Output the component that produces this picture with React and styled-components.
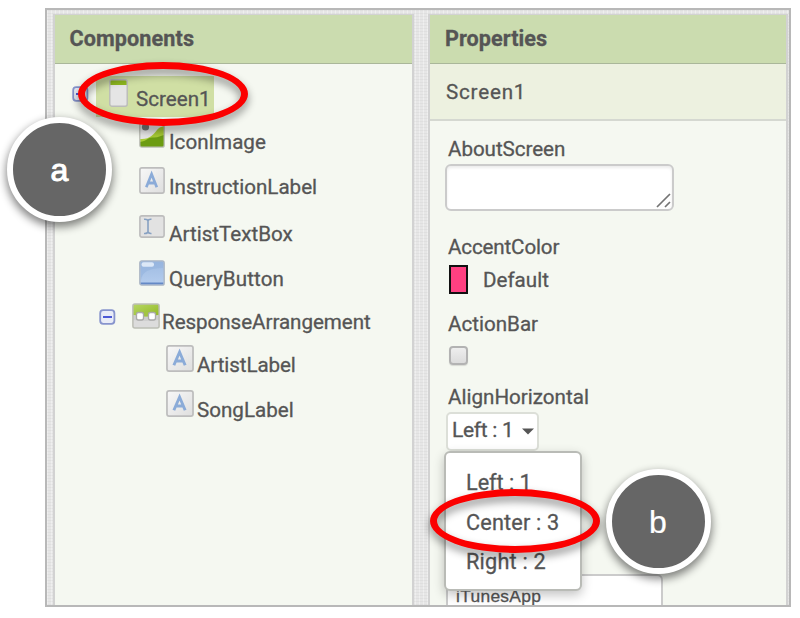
import React from 'react';
import styled, { createGlobalStyle } from 'styled-components';

const GlobalStyle = createGlobalStyle`
  * { box-sizing: border-box; }
  body { margin: 0; background: #fff; font-family: Roboto, sans-serif; color: #555; -webkit-text-stroke: 0.3px; }
`;

const Page = styled.div`
  position: relative;
  width: 800px;
  height: 618px;
  padding: 8px 9px 11px 45px;
  overflow: hidden;
`;

const Frame = styled.div`
  display: flex;
  gap: 14px;
  height: 599px;
  padding: 4px 0 0 6px;
  overflow: hidden;
  border: 2px solid #b8b8b8;
  background-color: #e6e6e6;
  background-image:
    repeating-linear-gradient(0deg, rgba(0,0,0,0.03) 0 1px, transparent 1px 3px),
    repeating-linear-gradient(90deg, rgba(255,255,255,0.35) 0 1px, transparent 1px 4px);
`;

const Panel = styled.section`
  flex: 0 0 ${(p) => p.$width}px;
  height: 600px;
  border: 2px solid #d2d2d2;
  border-top-width: 1px;
  background: #f5f8f1;
`;

const PanelHeader = styled.h2`
  height: 49px;
  margin: 0;
  padding-left: ${(p) => p.$inset}px;
  border-bottom: 1px solid #aab79a;
  background: #cbdcaf;
  font-size: 21.6px;
  font-weight: 700;
  line-height: 47px;
  letter-spacing: ${(p) => p.$track || 0.1}px;
`;

const TreeRow = styled.div`
  display: flex;
  align-items: flex-end;
  height: ${(p) => p.$height}px;
  padding-left: ${(p) => p.$indent}px;
`;

const Label = styled.span`
  display: block;
  height: 24px;
  font-size: 20.6px;
  line-height: 24px;
  letter-spacing: ${(p) => p.$track || 0}px;
  white-space: nowrap;
`;

const IconSlot = styled.span`
  display: flex;
  flex: none;
  width: ${(p) => p.$width}px;
  margin-bottom: ${(p) => p.$lift ?? 5}px;
  svg { display: block; }
`;

const Selected = styled.div`
  display: flex;
  align-items: flex-end;
  height: 41px;
  width: 118px;
  margin-bottom: -6px;
  padding: 0 0 6px 13px;
  background: #d0dfa4;
`;

const SelectedName = styled.div`
  display: flex;
  height: 57px;
  padding-left: 16px;
  align-items: center;
  border-bottom: 2px solid #d5d8d1;
  background: #edf1e0;
`;

const Fields = styled.div`
  display: flex;
  flex-direction: column;
  align-items: flex-start;
  padding: 16px 0 0 15px;
`;

const FieldLabel = styled(Label)`
  margin: ${(p) => p.$gap || 0}px 0 0 3px;
`;

const AboutInput = styled.div`
  display: flex;
  align-items: flex-end;
  justify-content: flex-end;
  width: 229px;
  height: 47px;
  margin-top: 3px;
  padding: 0 1px 1px 0;
  border: 2px solid #cbcbcb;
  border-radius: 6px;
  background: #fff;
  box-shadow: inset 0 2px 3px rgba(0,0,0,0.08);
`;

const ColorRow = styled.div`
  display: flex;
  align-items: center;
  gap: 15px;
  height: 29px;
  margin: 6px 0 0 4px;
`;

const Swatch = styled.span`
  width: 19px;
  height: 29px;
  border: 2px solid #111;
  background: #ff4081;
`;

const Checkbox = styled.span`
  width: 19px;
  height: 19px;
  margin: 10px 0 0 4px;
  border: 2px solid #b3b3b3;
  border-radius: 4px;
  background: linear-gradient(#eee, #dcdcdc);
  box-shadow: 0 1px 1px rgba(0,0,0,0.12);
`;

const Select = styled.div`
  display: flex;
  align-items: center;
  gap: 8px;
  width: 93px;
  height: 39px;
  margin: 3px 0 0 1px;
  padding: 0 0 3px 4px;
  border: 2px solid #dcdfd8;
  border-radius: 5px;
  background: #fff;
  font-size: 21px;
  letter-spacing: -0.3px;
  white-space: nowrap;
  svg { flex: none; margin-top: 3px; }
`;

const AppName = styled.div`
  width: 217px;
  height: 60px;
  margin: 123px 0 0 1px;
  padding: 10px 0 0 8px;
  border: 2px solid #cbcbcb;
  border-radius: 6px;
  background: #fff;
  font: 17.4px/20px "Liberation Sans", sans-serif;
  letter-spacing: 0.3px;
`;

const Menu = styled.div`
  position: absolute;
  left: 444px;
  top: 451px;
  display: flex;
  flex-direction: column;
  width: 138px;
  height: 140px;
  padding: 10px 0 0 20px;
  border: 2px solid #b9bbb6;
  border-radius: 6px;
  background: #fff;
  box-shadow: 0 4px 11px rgba(0,0,0,0.24);
`;

const MenuItem = styled.span`
  height: 39.5px;
  font-size: 21.7px;
  line-height: 39.5px;
  letter-spacing: ${(p) => p.$track}px;
  white-space: nowrap;
`;

const Ring = styled.div`
  position: absolute;
  left: ${(p) => p.$x}px;
  top: ${(p) => p.$y}px;
  width: 170px;
  height: 64px;
  border: 7px solid #fb0000;
  border-radius: 50%;
  filter: drop-shadow(0 5px 4px rgba(0,0,0,0.45));
`;

const Marker = styled.div`
  position: absolute;
  left: ${(p) => p.$x}px;
  top: ${(p) => p.$y}px;
  display: flex;
  align-items: center;
  justify-content: center;
  width: 105px;
  height: 105px;
  padding-top: ${(p) => p.$drop}px;
  border: 6.5px solid #fff;
  border-radius: 50%;
  background: #666;
  color: #fff;
  font: 400 32px/36px "Liberation Sans", sans-serif;
  -webkit-text-stroke: ${(p) => p.$stroke}px #fff;
  box-shadow: 0 4px 8px 1px rgba(0,0,0,0.48);
`;

const Expander = () => (
  <svg width="17" height="16" viewBox="0 0 17 16">
    <rect x="1.2" y="1.2" width="14.2" height="13.6" rx="3" fill="#e9ecf7" stroke="#8794cd" strokeWidth="1.8" />
    <path d="M4 8H13" stroke="#4c59d5" strokeWidth="2" />
  </svg>
);

const ScreenIcon = () => (
  <svg width="19" height="28" viewBox="0 0 19 28">
    <rect x="1" y="1" width="17" height="26" rx="2" fill="#e5e5e5" />
    <path d="M1 1H18V6H1Z" fill="#8db71f" />
    <rect x="0.8" y="0.8" width="17.4" height="26.4" rx="2" fill="none" stroke="#bbb" strokeWidth="1.4" />
  </svg>
);

const PictureIcon = () => (
  <svg width="26" height="26" viewBox="0 0 26 26">
    <rect x="1" y="1" width="24" height="24" rx="2" fill="#e6e6e6" />
    <circle cx="6.5" cy="5" r="3.6" fill="#777" />
    <path d="M1 17C10 18 15 12 18 8Q20 5 25 4V25H1Z" fill="#a8cc35" />
    <path d="M1 20C8 19 9 15 14 15.500C19 16 21 14 25 13V25H1Z" fill="#6c9c12" />
    <rect x="0.8" y="0.8" width="24.4" height="24.4" rx="2" fill="none" stroke="#b9bcb4" strokeWidth="1.3" />
  </svg>
);

const LabelIcon = ({ size = 26 }) => (
  <svg width={size} height="27" viewBox="0 0 26 26" preserveAspectRatio="none">
    <defs>
      <linearGradient id="labelFill" x1="0" y1="0" x2="1" y2="1">
        <stop offset="0" stopColor="#f8f8f8" /><stop offset="1" stopColor="#dedede" />
      </linearGradient>
    </defs>
    <rect x="0.9" y="0.9" width="24.2" height="24.2" rx="2" fill="url(#labelFill)" stroke="#bdbdbd" strokeWidth="1.6" />
    <path d="M7.300 19.500L12.600 6.800L17.800 19.500M9.300 15.400H16" fill="none" stroke="#8babd8" strokeWidth="2.7" />
  </svg>
);

const TextBoxIcon = () => (
  <svg width="26" height="23" viewBox="0 0 26 23">
    <rect x="0.9" y="0.9" width="24.2" height="21.2" rx="2" fill="#e2e2e2" stroke="#bdbdbd" strokeWidth="1.6" />
    <path d="M5 4.300Q8.500 4 9 6Q9.500 4 12.500 4.300M9 6V17M5 18.500Q8.500 18.800 9 16.800Q9.500 18.800 12.500 18.500" fill="none" stroke="#87a1c2" strokeWidth="1.6" />
  </svg>
);

const ButtonIcon = () => (
  <svg width="26" height="26" viewBox="0 0 26 26">
    <defs>
      <linearGradient id="buttonFill" x1="0" y1="0" x2="0" y2="1">
        <stop offset="0" stopColor="#9ebbe2" /><stop offset="1" stopColor="#b5cdee" />
      </linearGradient>
    </defs>
    <rect x="0.9" y="0.9" width="24.2" height="24.2" rx="2" fill="url(#buttonFill)" />
    <path d="M2 20C3 12 10 8 24 8V2H2Z" fill="#8fb0dc" opacity="0.5" />
    <rect x="2.500" y="2.300" width="12.500" height="4.400" rx="2" fill="#dce8f7" />
    <path d="M1.500 22.500H24.500V24.500H1.500Z" fill="#6489c6" />
    <rect x="0.8" y="0.8" width="24.4" height="24.4" rx="2" fill="none" stroke="#a9b4c3" strokeWidth="1.3" />
  </svg>
);

const ArrangementIcon = () => (
  <svg width="28" height="26" viewBox="0 0 28 26">
    <defs>
      <linearGradient id="arrFill" x1="0" y1="0" x2="1" y2="1">
        <stop offset="0" stopColor="#b7d765" /><stop offset="1" stopColor="#91b823" />
      </linearGradient>
    </defs>
    <rect x="0.9" y="0.9" width="26.200" height="24.200" rx="2" fill="#dcdcdc" />
    <path d="M1 12V1H27V12Q14 15 1 12Z" fill="url(#arrFill)" />
    <path d="M1 12Q14 15 27 12V17Q14 19 1 17Z" fill="#cfcfcf" />
    <path d="M11 9H17V13.200Q14 14 11 13.200Z" fill="#a2c543" />
    <rect x="0.9" y="0.9" width="26.200" height="24.200" rx="2" fill="none" stroke="#bcbeb5" strokeWidth="1.5" />
    <rect x="4.500" y="9.500" width="7" height="7.500" rx="2" fill="#fff" stroke="#aaa" strokeWidth="1.3" />
    <rect x="16.500" y="9.500" width="7" height="7.500" rx="2" fill="#fff" stroke="#aaa" strokeWidth="1.3" />
  </svg>
);

const ResizeGrip = () => (
  <svg width="15" height="15" viewBox="0 0 15 15">
    <path d="M1 14L14 1M9 14L14 9" stroke="#747474" strokeWidth="1.7" />
  </svg>
);

const Caret = () => (
  <svg width="12" height="7" viewBox="0 0 12 7"><path d="M0 0.500H12L6 6.500Z" fill="#555" /></svg>
);

const tree = [
  { name: 'IconImage', height: 43, indent: 84, slot: 30, icon: <PictureIcon />, lift: 6 },
  { name: 'InstructionLabel', height: 45, indent: 84, slot: 30, icon: <LabelIcon /> },
  { name: 'ArtistTextBox', height: 47, indent: 84, slot: 30, icon: <TextBoxIcon />, lift: 8 },
  { name: 'QueryButton', height: 45, indent: 84, slot: 30, icon: <ButtonIcon />, track: 0.1 },
  { name: 'ResponseArrangement', height: 43, indent: 44, slot: 30, icon: <ArrangementIcon />, expand: true, track: -0.05 },
  { name: 'ArtistLabel', height: 43, indent: 111, slot: 31, icon: <LabelIcon size={28} />, track: -0.1 },
  { name: 'SongLabel', height: 45, indent: 111, slot: 31, icon: <LabelIcon size={28} /> },
];

export default function App() {
  return (
    <>
      <GlobalStyle />
      <Page>
        <Frame>
          <Panel $width={361}>
            <PanelHeader $inset={14.5}>Components</PanelHeader>
            <TreeRow $height={47} $indent={17}>
              <IconSlot $width={24} $lift={9}><Expander /></IconSlot>
              <Selected>
                <IconSlot $width={27} $lift={4}><ScreenIcon /></IconSlot>
                <Label>Screen1</Label>
              </Selected>
            </TreeRow>
            {tree.map((n) => (
              <TreeRow key={n.name} $height={n.height} $indent={n.indent}>
                {n.expand && <IconSlot $width={33} $lift={9}><Expander /></IconSlot>}
                <IconSlot $width={n.slot} $lift={n.lift}>{n.icon}</IconSlot>
                <Label $track={n.track}>{n.name}</Label>
              </TreeRow>
            ))}
          </Panel>
          <Panel $width={360}>
            <PanelHeader $inset={15} $track={0.05}>Properties</PanelHeader>
            <SelectedName><Label $track={0.8}>Screen1</Label></SelectedName>
            <Fields>
              <FieldLabel $track={-0.05}>AboutScreen</FieldLabel>
              <AboutInput><ResizeGrip /></AboutInput>
              <FieldLabel $gap={24} $track={-0.15}>AccentColor</FieldLabel>
              <ColorRow><Swatch /><Label>Default</Label></ColorRow>
              <FieldLabel $gap={18}>ActionBar</FieldLabel>
              <Checkbox />
              <FieldLabel $gap={20}>AlignHorizontal</FieldLabel>
              <Select>Left : 1<Caret /></Select>
              <AppName>iTunesApp</AppName>
            </Fields>
          </Panel>
        </Frame>
        <Menu>
          <MenuItem $track={-0.05}>Left : 1</MenuItem>
          <MenuItem $track={0.15}>Center : 3</MenuItem>
          <MenuItem $track={0.2}>Right : 2</MenuItem>
        </Menu>
        <Ring $x={78} $y={62} />
        <Ring $x={430} $y={489} />
        <Marker $x={7} $y={116.5} $stroke={1} $drop={2}>a</Marker>
        <Marker $x={605.5} $y={468.5} $stroke={0.2} $drop={2}>b</Marker>
      </Page>
    </>
  );
}
